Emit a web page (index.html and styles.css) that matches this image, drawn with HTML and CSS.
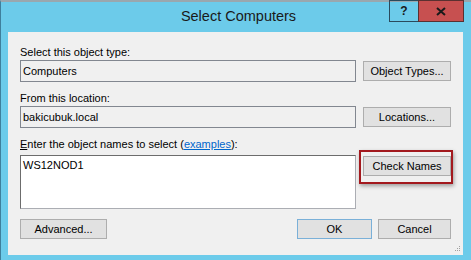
FILE: index.html
```html
<!DOCTYPE html>
<html lang="en">
<head>
    <meta charset="UTF-8">
    <meta name="viewport" content="width=device-width, initial-scale=1.0">
    <title>Select Computers</title>
    <link rel="stylesheet" href="styles.css">
</head>
<body>
    <div class="window">
        <div class="titlebar">
            <div class="title">Select Computers</div>
            <div class="caption-buttons">
                <div class="cap-btn help">?</div>
                <div class="cap-btn close">
                    <svg width="10" height="9" viewBox="0 0 10 9">
                        <path d="M1 1 L9 8 M9 1 L1 8" stroke="#1a1a1a" stroke-width="2"/>
                    </svg>
                </div>
            </div>
        </div>
        <div class="client">
            <div class="label">Select this object type:</div>
            <div class="row">
                <div class="field">Computers</div>
                <button class="btn side">Object Types...</button>
            </div>
            <div class="label">From this location:</div>
            <div class="row">
                <div class="field">bakicubuk.local</div>
                <button class="btn side">Locations...</button>
            </div>
            <div class="label names-label"><u>E</u>nter the object names to select (<a href="#">examples</a>):</div>
            <div class="row names-row">
                <div class="names">WS12NOD1</div>
                <div class="highlight">
                    <button class="btn side">Check Names</button>
                </div>
            </div>
            <div class="footer">
                <button class="btn advanced">Advanced...</button>
                <div class="footer-right">
                    <button class="btn ok">OK</button>
                    <button class="btn cancel">Cancel</button>
                </div>
            </div>
            <div class="grip">
                <svg width="7" height="7" viewBox="0 0 7 7">
                    <rect x="5" y="1" width="1" height="1" fill="#a0a0a0"/>
                    <rect x="3" y="3" width="1" height="1" fill="#a0a0a0"/>
                    <rect x="5" y="3" width="1" height="1" fill="#a0a0a0"/>
                    <rect x="1" y="5" width="1" height="1" fill="#a0a0a0"/>
                    <rect x="3" y="5" width="1" height="1" fill="#a0a0a0"/>
                    <rect x="5" y="5" width="1" height="1" fill="#a0a0a0"/>
                </svg>
            </div>
        </div>
    </div>
</body>
</html>
```
FILE: styles.css
```css
body {
    margin: 0;
    font-family: "Liberation Sans", Arial, sans-serif;
    background-color: #6ccbea;
}
.window {
    width: 471px;
    height: 260px;
    box-sizing: border-box;
    background-color: #6ccbea;
    border-top: 2px solid #9aa7ae;
    border-left: 1px solid #3f7f9c;
    padding: 0 8px 0 7px;
}
.titlebar {
    height: 30px;
    position: relative;
}
.title {
    text-align: center;
    font-size: 14.5px;
    color: #1a1a1a;
    padding-top: 6px;
    padding-left: 6px;
}
.caption-buttons {
    position: absolute;
    top: -2px;
    right: -1px;
    display: flex;
}
.cap-btn {
    height: 22px;
    box-sizing: border-box;
    display: flex;
    align-items: center;
    justify-content: center;
}
.help {
    width: 29px;
    border: 1px solid #2a4a5c;
    border-right: none;
    font-weight: bold;
    font-size: 12px;
    color: #1a1a1a;
}
.close {
    width: 46px;
    background-color: #c75050;
    border: 1px solid #5a3030;
}
.client {
    background-color: #f0f0f0;
    height: 223px;
    box-sizing: border-box;
    padding: 13px 12px 0 12px;
    font-size: 11px;
    color: #000;
    position: relative;
}
.label {
    height: 14px;
    line-height: 14px;
}
.label a {
    color: #0066cc;
}
.names-label {
    margin-top: 5px;
}
.row {
    display: flex;
    align-items: center;
    gap: 7px;
    margin-top: 1px;
    margin-bottom: 9px;
}
.field {
    flex: 1;
    height: 22px;
    box-sizing: border-box;
    border: 1px solid #828790;
    padding: 3px 2px;
    line-height: 14px;
}
.btn {
    font-family: inherit;
    font-size: 11px;
    color: #000;
    background-color: #e1e1e1;
    border: 1px solid #adadad;
    height: 20px;
    padding: 0;
    margin: 0;
}
.side {
    width: 88px;
}
.names-row {
    align-items: flex-start;
    margin-top: 4px;
    margin-bottom: 10px;
}
.names {
    flex: 1;
    height: 54px;
    box-sizing: border-box;
    background-color: #fff;
    border: 1px solid #abadb3;
    border-top-color: #6c6c6c;
    border-left-color: #6c6c6c;
    padding: 2px 2px;
    line-height: 14px;
}
.highlight {
    position: relative;
    margin-top: 1px;
}
.highlight::after {
    content: "";
    position: absolute;
    left: -4px;
    top: -6px;
    right: -2px;
    bottom: -8px;
    border: 2px solid #a3191e;
    box-shadow: 1px 2px 4px rgba(0, 0, 0, 0.35);
}
.footer {
    display: flex;
    justify-content: space-between;
}
.footer-right {
    display: flex;
    gap: 6px;
}
.advanced {
    width: 87px;
}
.ok {
    width: 75px;
    border-color: #7ab0d8;
}
.cancel {
    width: 73px;
}
.grip {
    position: absolute;
    right: 2px;
    bottom: 3px;
    line-height: 0;
}
```
